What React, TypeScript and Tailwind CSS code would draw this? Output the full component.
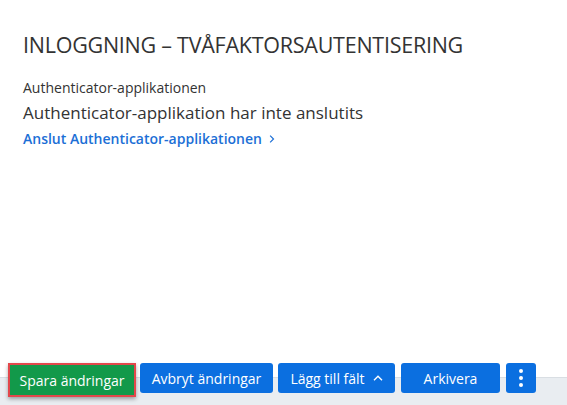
export default function App() {
  return (
    <div className="flex flex-col h-screen w-full bg-white overflow-hidden font-['Open_Sans',sans-serif] text-[#333]">
      <div className="flex-1 px-[23px] pt-[30px]">
        <h1 className="text-[21.5px] leading-[30px] font-normal tracking-[-0.25px]">INLOGGNING – TVÅFAKTORSAUTENTISERING</h1>
        <div className="mt-[17px]">
          <p className="text-[14px] leading-[22px]">Authenticator-applikationen</p>
          <p className="text-[17px] leading-[27px]">Authenticator-applikation har inte anslutits</p>
          <a href="#" className="inline-flex items-center gap-[7px] text-[14px] leading-[22px] font-semibold text-[#1c6fd6]">
            Anslut Authenticator-applikationen
            <svg viewBox="0 0 8 12" className="w-[6px] h-[10px]" fill="none" stroke="currentColor" strokeWidth="1.6">
              <path d="M1.5 1.5 6 6l-4.5 4.5" />
            </svg>
          </a>
        </div>
      </div>
      <div className="h-[42px] px-[8px] bg-[linear-gradient(to_bottom,#fff_14px,#d9dee3_14px,#d9dee3_15px,#e9edf1_15px)]">
        <div className="flex items-start">
          <button className="h-[34px] w-[128px] border-2 border-[#e2474b] bg-[#12994a] text-white text-[14px] shadow-[0_2px_4px_rgba(0,0,0,0.35)]">
            Spara ändringar
          </button>
          <button className="ml-[4px] h-[30px] w-[133px] rounded-[3px] bg-[#0b6fe0] text-white text-[14px]">Avbryt ändringar</button>
          <button className="ml-[5px] h-[30px] w-[117px] rounded-[3px] bg-[#0b6fe0] text-white text-[14px] flex items-center justify-center gap-[8px]">
            Lägg till fält
            <svg viewBox="0 0 10 6" className="w-[10px] h-[6px]" fill="none" stroke="currentColor" strokeWidth="1.4">
              <path d="M1 5.2 5 1.2l4 4" />
            </svg>
          </button>
          <button className="ml-[6px] h-[30px] w-[99px] rounded-[3px] bg-[#0b6fe0] text-white text-[14px]">Arkivera</button>
          <button className="ml-[6px] h-[30px] w-[30px] rounded-[3px] bg-[#0b6fe0] text-white flex flex-col items-center justify-center gap-[3px]">
            <span className="w-[4px] h-[4px] rounded-full bg-white" />
            <span className="w-[4px] h-[4px] rounded-full bg-white" />
            <span className="w-[4px] h-[4px] rounded-full bg-white" />
          </button>
        </div>
      </div>
    </div>
  );
}
